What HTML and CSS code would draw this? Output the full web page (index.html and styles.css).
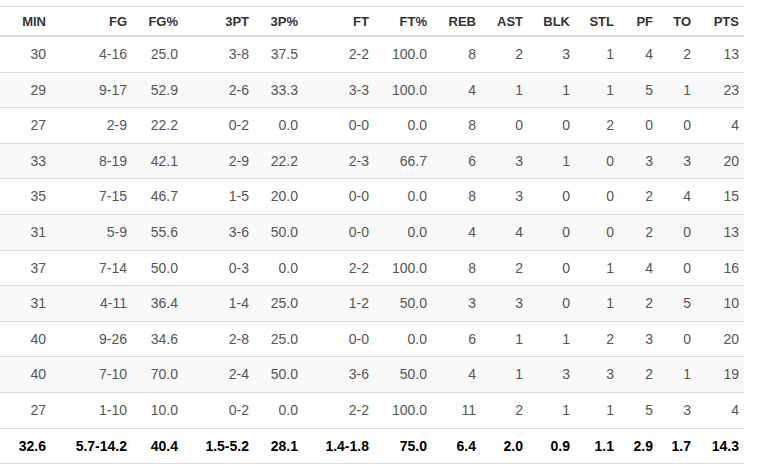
FILE: index.html
```html
<!DOCTYPE html>
<html>
<head>
<meta charset="utf-8">
<link rel="stylesheet" href="styles.css">
</head>
<body>
<table class="stats">
  <colgroup>
    <col class="c-min"><col class="c-fg"><col class="c-fgp"><col class="c-3pt"><col class="c-3pp"><col class="c-ft"><col class="c-ftp"><col class="c-reb"><col class="c-ast"><col class="c-blk"><col class="c-stl"><col class="c-pf"><col class="c-to"><col class="c-pts">
  </colgroup>
  <thead>
    <tr><th>MIN</th><th>FG</th><th>FG%</th><th>3PT</th><th>3P%</th><th>FT</th><th>FT%</th><th>REB</th><th>AST</th><th>BLK</th><th>STL</th><th>PF</th><th>TO</th><th>PTS</th></tr>
  </thead>
  <tbody>
    <tr><td>30</td><td>4-16</td><td>25.0</td><td>3-8</td><td>37.5</td><td>2-2</td><td>100.0</td><td>8</td><td>2</td><td>3</td><td>1</td><td>4</td><td>2</td><td>13</td></tr>
    <tr><td>29</td><td>9-17</td><td>52.9</td><td>2-6</td><td>33.3</td><td>3-3</td><td>100.0</td><td>4</td><td>1</td><td>1</td><td>1</td><td>5</td><td>1</td><td>23</td></tr>
    <tr><td>27</td><td>2-9</td><td>22.2</td><td>0-2</td><td>0.0</td><td>0-0</td><td>0.0</td><td>8</td><td>0</td><td>0</td><td>2</td><td>0</td><td>0</td><td>4</td></tr>
    <tr><td>33</td><td>8-19</td><td>42.1</td><td>2-9</td><td>22.2</td><td>2-3</td><td>66.7</td><td>6</td><td>3</td><td>1</td><td>0</td><td>3</td><td>3</td><td>20</td></tr>
    <tr><td>35</td><td>7-15</td><td>46.7</td><td>1-5</td><td>20.0</td><td>0-0</td><td>0.0</td><td>8</td><td>3</td><td>0</td><td>0</td><td>2</td><td>4</td><td>15</td></tr>
    <tr><td>31</td><td>5-9</td><td>55.6</td><td>3-6</td><td>50.0</td><td>0-0</td><td>0.0</td><td>4</td><td>4</td><td>0</td><td>0</td><td>2</td><td>0</td><td>13</td></tr>
    <tr><td>37</td><td>7-14</td><td>50.0</td><td>0-3</td><td>0.0</td><td>2-2</td><td>100.0</td><td>8</td><td>2</td><td>0</td><td>1</td><td>4</td><td>0</td><td>16</td></tr>
    <tr><td>31</td><td>4-11</td><td>36.4</td><td>1-4</td><td>25.0</td><td>1-2</td><td>50.0</td><td>3</td><td>3</td><td>0</td><td>1</td><td>2</td><td>5</td><td>10</td></tr>
    <tr><td>40</td><td>9-26</td><td>34.6</td><td>2-8</td><td>25.0</td><td>0-0</td><td>0.0</td><td>6</td><td>1</td><td>1</td><td>2</td><td>3</td><td>0</td><td>20</td></tr>
    <tr><td>40</td><td>7-10</td><td>70.0</td><td>2-4</td><td>50.0</td><td>3-6</td><td>50.0</td><td>4</td><td>1</td><td>3</td><td>3</td><td>2</td><td>1</td><td>19</td></tr>
    <tr><td>27</td><td>1-10</td><td>10.0</td><td>0-2</td><td>0.0</td><td>2-2</td><td>100.0</td><td>11</td><td>2</td><td>1</td><td>1</td><td>5</td><td>3</td><td>4</td></tr>
  </tbody>
  <tfoot>
    <tr><td>32.6</td><td>5.7-14.2</td><td>40.4</td><td>1.5-5.2</td><td>28.1</td><td>1.4-1.8</td><td>75.0</td><td>6.4</td><td>2.0</td><td>0.9</td><td>1.1</td><td>2.9</td><td>1.7</td><td>14.3</td></tr>
  </tfoot>
</table>
</body>
</html>
```

FILE: styles.css
```css
html, body {
  margin: 0;
  padding: 0;
  background: #fff;
}

body {
  padding-top: 6px;
  font-family: "Liberation Sans", Arial, sans-serif;
}

.stats {
  width: 744px;
  table-layout: fixed;
  border-collapse: collapse;
  border-spacing: 0;
  border-top: 1px solid #ddd;
}

.c-min { width: 51px; }
.c-fg { width: 81px; }
.c-fgp { width: 51px; }
.c-3pt { width: 71px; }
.c-3pp { width: 49px; }
.c-ft { width: 71px; }
.c-ftp { width: 58px; }
.c-reb { width: 49px; }
.c-ast { width: 47px; }
.c-blk { width: 47px; }
.c-stl { width: 44px; }
.c-pf { width: 39px; }
.c-to { width: 38px; }
.c-pts { width: 48px; }

.stats th {
  font-size: 13px;
  font-weight: bold;
  color: #333;
  text-align: right;
  line-height: 20px;
  padding: 5px 5px 3px;
  border-bottom: 2px solid #ddd;
  white-space: nowrap;
}

.stats td {
  font-size: 14px;
  color: #555;
  text-align: right;
  line-height: 18.6px;
  padding: 8px 5px;
  border-top: 1px solid #ddd;
  white-space: nowrap;
}

.stats tbody tr:nth-child(even) td {
  background: #f9f9f9;
}

.stats tfoot td {
  font-weight: bold;
  color: #000;
  border-bottom: 1px solid #ddd;
}
```
